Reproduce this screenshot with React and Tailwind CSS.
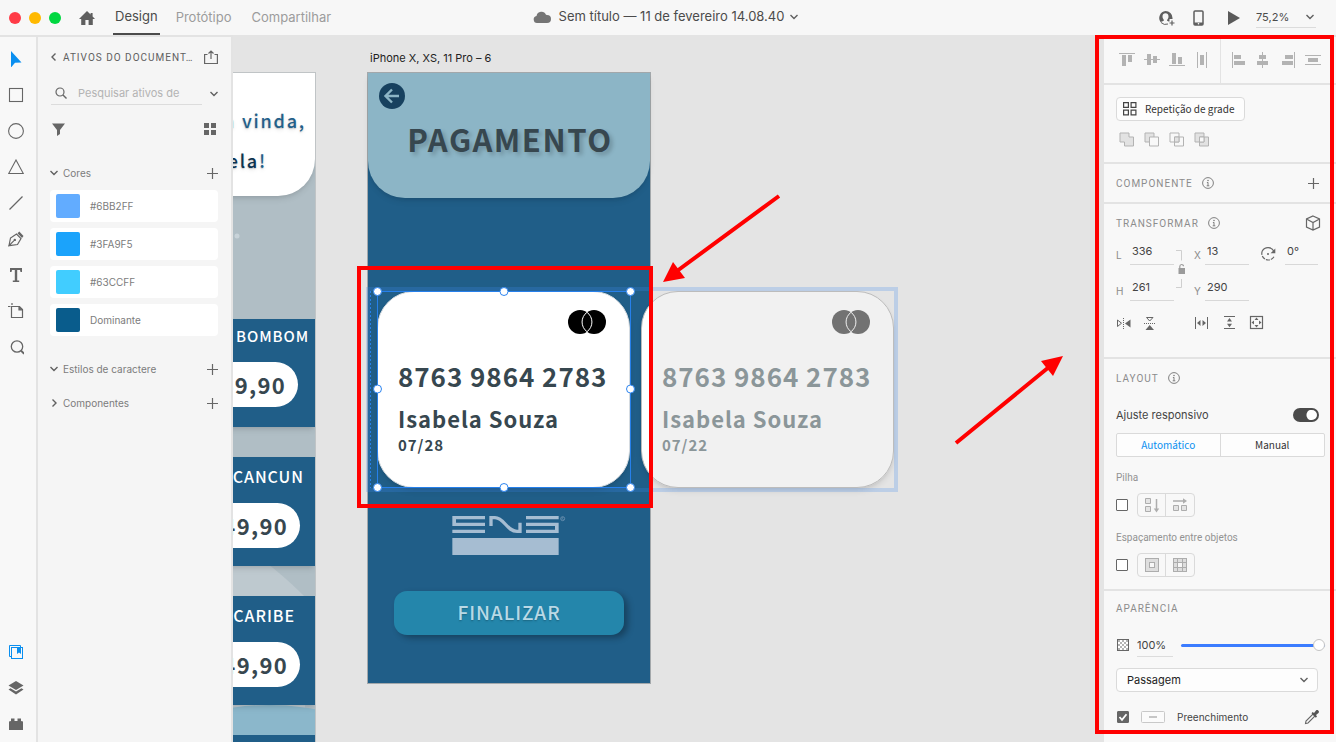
import { useState } from 'react'

const COLORS = [
  { name: '#6BB2FF', swatch: 'bg-[#62acff]' },
  { name: '#3FA9F5', swatch: 'bg-[#1ba3fb]' },
  { name: '#63CCFF', swatch: 'bg-[#41cdff]' },
  { name: 'Dominante', swatch: 'bg-[#095c8c]' },
]

const TRIPS = [
  { title: 'EM BOMBOM', card: 'h-[108px] pt-[3px]', text: 'pr-[6px] text-[15px]', pill: 'mt-3 mr-[17px]' },
  { title: 'CANCUN', card: 'h-[109px] pt-[5px]', text: 'pr-[11px] text-base', pill: 'mt-[13px] mr-[15px]' },
  { title: 'CARIBE', card: 'h-[109px] pt-[5px]', text: 'pr-5 text-base', pill: 'mt-[13px] mr-[15px]' },
]

function Svg({ w = 16, h = 16, className = '', children }) {
  return (
    <svg
      width={w}
      height={h}
      viewBox={`0 0 ${w} ${h}`}
      fill="none"
      aria-hidden="true"
      className={`shrink-0 ${className}`}
    >
      {children}
    </svg>
  )
}

function Chevron({ dir = 'down' }) {
  const d = {
    down: 'M1.5 3 5 6.500l3.500-3.500',
    left: 'M6.5 1.5 3 5l3.5 3.5',
    right: 'M3.5 1.5 7 5 3.5 8.5',
  }[dir]
  return (
    <Svg w={10} h={10}>
      <path d={d} stroke="#606060" strokeWidth="1.4" />
    </Svg>
  )
}

function Plus() {
  return (
    <Svg w={12} h={12}>
      <path d="M6.5 1v11M1 6.5h11" stroke="#666" strokeWidth="1.2" />
    </Svg>
  )
}

function Info() {
  return (
    <Svg w={12} h={12}>
      <circle cx="6" cy="6" r="5.4" stroke="#808080" />
      <path d="M6 5.3v3.6M4.9 5.5H6M4.7 8.8h2.6" stroke="#808080" />
      <circle cx="6" cy="3.5" r=".8" fill="#808080" />
    </Svg>
  )
}

/* Header */

function Header() {
  return (
    <header className="grid h-[35px] shrink-0 grid-cols-[1fr_auto_1fr] items-center bg-[#f7f7f7] text-[13px] text-[#4b4b4b]">
      <div className="flex h-full items-center">
        <div className="flex gap-2 pl-[9px]">
          <span className="size-3 rounded-full bg-[#ff3b47]" />
          <span className="size-3 rounded-full bg-[#ffb900]" />
          <span className="size-3 rounded-full bg-[#00d740]" />
        </div>
        <button aria-label="Início" className="ml-[18px]">
          <Svg w={16} h={16}>
            <path d="M8 1 0 9h2.2v6H6.4v-5h3.2v5h4.2V9H16l-2.4-2.4V3h-2v1.6z" fill="#5f5f5f" />
          </Svg>
        </button>
        <nav className="ml-[18px] flex h-full items-center">
          <a href="#design" className="flex h-full items-center border-b-2 border-[#4b4b4b] px-[2px] pt-px">
            Design
          </a>
          <a href="#prototipo" className="ml-4 text-[#9c9c9c]">Protótipo</a>
          <a href="#compartilhar" className="ml-5 text-[#9c9c9c]">Compartilhar</a>
        </nav>
      </div>
      <button className="flex items-center pr-1 pb-px">
        <Svg w={18} h={12}>
          <path
            d="M4 12a3.6 3.6 0 0 1-.5-7.1A5 5 0 0 1 13 3.8a3.6 3.6 0 0 1 1 .2A4 4 0 0 1 14 12z"
            fill="#757575"
          />
        </Svg>
        <span className="mr-[5px] ml-2">Sem título — 11 de fevereiro 14.08.40</span>
        <Chevron />
      </button>
      <div className="flex items-center justify-end pr-5">
        <button aria-label="Convidar">
          <Svg w={17} h={16}>
            <path
              d="M7.5 1a7 7 0 0 1 7 7v1h-3v2.5h-1C9 11 9 10.300 9 10c1-1 1.500-2.300 1.500-3.500C10.500 4.500 9.300 3.300 7.500 3.300S4.500 4.500 4.500 6.500C4.500 7.700 5 9 6 10c0 1-2 1.300-3.300 2.200A7 7 0 0 1 7.500 1z"
              fill="#5f5f5f"
            />
            <path d="M3 12.500A6.500 6.500 0 0 0 10 14" stroke="#5f5f5f" />
            <path d="M14 10.500v5M11.500 13h5" stroke="#5f5f5f" strokeWidth="1.200" />
          </Svg>
        </button>
        <button aria-label="Visualizar no dispositivo" className="ml-[18px]">
          <Svg w={11} h={16}>
            <rect x="1" y="1" width="9" height="14" rx="1" stroke="#5f5f5f" strokeWidth="1.500" />
            <path d="M1 12.500h9V15H1z" fill="#5f5f5f" />
            <circle cx="5.500" cy="13.800" r=".8" fill="#fff" />
          </Svg>
        </button>
        <button aria-label="Reproduzir" className="ml-6">
          <Svg w={12} h={14}>
            <path d="M0 0v14l12-7z" fill="#5a5a5a" />
          </Svg>
        </button>
        <label className="ml-4 flex w-[60px] items-center border-b border-[#dcdcdc]">
          <input
            aria-label="Zoom"
            defaultValue="75,2%"
            className="h-5 w-[49px] bg-transparent text-[11px] outline-none"
          />
          <Chevron />
        </label>
      </div>
    </header>
  )
}

/* Tool column */

const TOOLS = [
  ['Selecionar', <path d="M3 0v16.500l4-4.800 6.500-.3z" fill="#0a8ff0" />],
  ['Retângulo', <rect x="1.500" y="1.500" width="13" height="13" stroke="#666" strokeWidth="1.100" />],
  ['Elipse', <circle cx="8" cy="8" r="7.400" stroke="#666" strokeWidth="1.100" />],
  ['Polígono', <path d="M8 1 .7 14.500h14.600z" stroke="#666" strokeWidth="1.100" />],
  ['Linha', <path d="M1.500 14.500l13-13" stroke="#666" strokeWidth="1.200" />],
  [
    'Caneta',
    <g>
      <path d="M1 14.500 2.500 7l6-4 4.500 4.500-3.500 6L1 14.700l5-5" stroke="#666" strokeWidth="1.200" />
      <circle cx="6.800" cy="8.900" r="1.200" fill="#666" />
      <path d="m9.500 2.200 1.800-1.700L15.500 5 14 7z" fill="#666" />
    </g>,
  ],
  ['Texto', <path d="M2 1h12v4h-1.500l-.5-2H9.200v10.500h2V15H4.800v-1.500h2V3H4l-.5 2H2z" fill="#666" />],
  [
    'Prancheta',
    <g stroke="#666" strokeWidth="1.200">
      <path d="M0 3.500h2.500M4 0v2" />
      <path d="M3.500 3.500h8l3 3v8h-11z" />
      <path d="M11 3.500v3.300h3.500" fill="#666" />
    </g>,
  ],
  [
    'Zoom',
    <g stroke="#666">
      <circle cx="9" cy="7.500" r="5.700" strokeWidth="1.300" />
      <path d="m13 11.600 3.200 3.200" strokeWidth="2" />
    </g>,
  ],
]

const PANELS = [
  [
    'Ativos',
    <g>
      <path d="M3 12.500H1.500v-11h11V3" stroke="#0a8ff0" />
      <rect x="3.500" y="3.500" width="11" height="11" stroke="#0a8ff0" />
      <path d="M9 3h4v7l-2-1.500L9 10z" fill="#0a8ff0" />
    </g>,
  ],
  [
    'Camadas',
    <g fill="#666">
      <path d="m8 1 7.500 4.500L8 10 .5 5.500z" />
      <path d="m.5 9.500 2-1.200L8 11.500l5.500-3.200 2 1.200L8 14.500z" />
    </g>,
  ],
  ['Plugins', <path d="M1 5.500 3 5V2.500h3.500V5h3V2.500H13V5l2 .5V14H1z" fill="#666" />],
]

function ToolBar() {
  return (
    <div className="flex w-[38px] shrink-0 flex-col justify-between border-r-2 border-[#e3e3e3] bg-[#f8f8f8] pt-1">
      <div className="flex flex-col">
        {TOOLS.map(([label, icon]) => (
          <button key={label} aria-label={label} className="flex h-9 items-center pl-2">
            <Svg>{icon}</Svg>
          </button>
        ))}
      </div>
      <div className="flex flex-col">
        {PANELS.map(([label, icon]) => (
          <button key={label} aria-label={label} className="flex h-9 items-center pl-2">
            <Svg>{icon}</Svg>
          </button>
        ))}
      </div>
    </div>
  )
}

/* Assets panel */

function AssetGroup({ title, open }) {
  return (
    <div className="flex h-[34px] items-center justify-between">
      <button className="flex items-center gap-1">
        <Chevron dir={open ? 'down' : 'right'} />
        {title}
      </button>
      <button aria-label={`Adicionar em ${title}`}>
        <Plus />
      </button>
    </div>
  )
}

function AssetsPanel() {
  return (
    <aside className="w-[195px] shrink-0 border-r-2 border-[#e3e3e3] bg-[#f5f5f5] pr-[13px] pl-[11px] text-[10px] text-[#7c7c7c]">
      <div className="flex h-10 items-center justify-between">
        <button className="flex items-center gap-1 font-['Roboto',sans-serif] tracking-[1px] whitespace-nowrap text-[#606060]">
          <Chevron dir="left" />
          ATIVOS DO DOCUMENT…
        </button>
        <button aria-label="Publicar">
          <Svg w={14} h={14}>
            <path d="M3.500 4.500H.6v9h12.800v-9h-2.900M7 9V1.500M4.500 3.500 7 1l2.500 2.500" stroke="#666" strokeWidth="1.200" />
          </Svg>
        </button>
      </div>
      <div className="mt-[5px] flex items-center justify-between">
        <label className="ml-[2px] flex h-[23px] w-[151px] items-center gap-[11px] border-b border-[#dcdcdc] pl-1">
          <Svg w={12} h={12}>
            <circle cx="5" cy="5" r="4" stroke="#666" strokeWidth="1.200" />
            <path d="m8 8 3.500 3.500" stroke="#666" strokeWidth="1.400" />
          </Svg>
          <input
            aria-label="Pesquisar ativos"
            placeholder="Pesquisar ativos de"
            className="w-full min-w-0 bg-transparent text-[11px] outline-none placeholder:text-[#b3b3b3]"
          />
        </label>
        <button aria-label="Opções de pesquisa" className="-mr-px">
          <Chevron />
        </button>
      </div>
      <div className="flex h-12 items-center justify-between">
        <button aria-label="Filtrar" className="ml-[3px]">
          <Svg w={13} h={13}>
            <path d="M0 .5h13L8 7v4l-3 2V7z" fill="#666" />
          </Svg>
        </button>
        <button aria-label="Exibir em grade">
          <Svg w={14} h={14}>
            <path d="M0 1h5v5H0zM7 1h5v5H7zM0 8h5v5H0zM7 8h5v5H7z" fill="#666" />
          </Svg>
        </button>
      </div>
      <div className="pt-[3px]">
        <AssetGroup title="Cores" open />
      </div>
      <ul className="ml-px flex flex-col gap-[6px]">
        {COLORS.map((c) => (
          <li key={c.name} className="flex h-8 items-center gap-[10px] rounded-sm bg-white px-[6px]">
            <span className={`size-6 rounded-xs ${c.swatch}`} />
            {c.name}
          </li>
        ))}
      </ul>
      <div className="mt-4">
        <AssetGroup title="Estilos de caractere" open />
        <AssetGroup title="Componentes" />
      </div>
    </aside>
  )
}

/* Canvas */

function HomeArtboard() {
  return (
    <div className="absolute top-[37px] -left-[201px] h-[800px] w-[284px] overflow-hidden border border-[#c0c4c6] bg-[#b0bec5] font-['Noto_Sans_CJK_JP',sans-serif]">
      <svg className="absolute inset-0" width="282" height="798" viewBox="0 0 282 798" aria-hidden="true">
        <path d="M0 800V470h180c32 0 62 24 92 54v276H0z" fill="#bec9cf" />
        <ellipse cx="236" cy="760" rx="180" ry="128" fill="#8bb7cb" />
        <circle cx="204" cy="163" r="2.500" fill="#c8d3d9" />
      </svg>
      <div className="relative flex flex-col">
        <div className="flex h-[123px] flex-col items-end rounded-b-[37px] bg-white pt-8 text-lg leading-[30px] font-medium tracking-widest shadow-md text-shadow-md">
          <span className="pr-[9px] text-[#23608a]">Bem vinda,</span>
          <span className="mt-[10px] pr-12 text-[#0c3350]">
            Isabela<span className="text-[#23608a]">!</span>
          </span>
        </div>
        <div className="mt-[123px] flex flex-col gap-[30px]">
          {TRIPS.map((trip) => (
            <div key={trip.title} className={`flex flex-col items-end bg-[#205e88] shadow-md ${trip.card}`}>
              <span className={`leading-7 font-medium tracking-[0.06em] text-white ${trip.text}`}>
                {trip.title}
              </span>
              <span
                className={`flex h-[45px] w-[200px] items-center justify-end rounded-full bg-white pr-3 text-[22px] font-bold tracking-[0.06em] text-[#37474f] ${trip.pill}`}
              >
                49,90
              </span>
            </div>
          ))}
          <div className="h-[70px] bg-[#205e88]" />
        </div>
      </div>
    </div>
  )
}

function Logo() {
  return (
    <svg width="114" height="39" viewBox="306 78 342 117" fill="#a6bdd2" role="img" aria-label="ENS">
      <path d="M307 78h98v10h-87v10h87v10h-98zM307 119h98v10h-98z" />
      <path d="M528 78h98v10h-98zM528 98h98v31h-98v-10h87v-11h-87z" />
      <path d="M423 108V83h12c28 0 35 41 66 41h9V98" fill="none" stroke="#a6bdd2" strokeWidth="10" />
      <path d="M307 144h319v51H307z" />
      <circle cx="638" cy="86" r="6" fill="none" stroke="#7f9fbb" strokeWidth="2" />
      <path d="M636 89v-6h4M637 86l4 3" fill="none" stroke="#7f9fbb" strokeWidth="1.500" />
    </svg>
  )
}

function PaymentArtboard() {
  return (
    <div className="absolute top-[37px] left-[134px] flex h-[612px] w-[284px] flex-col items-center border border-[#a3a8ab] bg-[#205e88] font-['Noto_Sans_CJK_JP',sans-serif]">
      <div className="flex h-[125px] w-full flex-col rounded-b-[37px] bg-[#8cb5c6] pt-[10px] shadow-md">
        <button aria-label="Voltar" className="ml-[11px] flex size-[26px] items-center justify-center rounded-full bg-[#17415f]">
          <Svg w={18} h={18}>
            <path d="M16 9H3M9 2.500 2.500 9 9 15.500" stroke="#8cb5c6" strokeWidth="2.400" />
          </Svg>
        </button>
        <h1 className="mt-2 pl-[2px] text-center text-[31px] leading-[44px] font-bold tracking-wider text-[#37474f] text-shadow-[3px_3px_4px_rgb(0_0_0/0.2)]">
          PAGAMENTO
        </h1>
      </div>
      <div className="mt-auto">
        <Logo />
      </div>
      <button className="mt-9 mb-12 h-11 w-[230px] rounded-[13px] bg-[#2486ab] pb-[2px] text-[19px] font-medium tracking-wider text-[#b9d9e6] shadow-[4px_3px_6px_rgb(0_0_0/0.3)] text-shadow-sm">
        FINALIZAR
      </button>
    </div>
  )
}

function CreditCard({ date, faded }) {
  return (
    <div
      className={`flex h-[197px] w-[253px] flex-col rounded-[37px] border pl-5 font-['Noto_Sans_CJK_JP',sans-serif] font-bold tracking-[0.06em] shadow-md ${
        faded
          ? 'border-[#bcbcbc] bg-[linear-gradient(to_right,#fff_9px,#f1f1f1_9px)] text-[#8b9699]'
          : 'border-[#d5dbe0] bg-white text-[#37474f]'
      }`}
    >
      <svg
        width="38"
        height="24"
        viewBox="0 0 38 24"
        className="mt-[18px] mr-[23px] self-end"
        aria-hidden="true"
      >
        <g fill={faded ? '#727272' : '#000'}>
          <circle cx="12" cy="12" r="12" />
          <circle cx="26" cy="12" r="12" />
        </g>
        <path
          d="M19 2.300a12 12 0 0 1 0 19.400a12 12 0 0 1 0-19.400z"
          fill="none"
          stroke={faded ? '#f1f1f1' : '#fff'}
          strokeWidth="1"
        />
      </svg>
      <span className="mt-6 text-[26px] leading-9">8763 9864 2783</span>
      <span className="mt-[9px] text-[22px] leading-[30px]">Isabela Souza</span>
      <span className="text-[15px] leading-6">{date}</span>
    </div>
  )
}

function Canvas() {
  const handles = [
    [377.5, 291.5], [504, 291.5], [630.5, 291.5],
    [377.5, 389], [630.5, 389],
    [377.5, 487.5], [504, 487.5], [630.5, 487.5],
  ]

  return (
    <main className="relative min-w-0 flex-1 overflow-hidden bg-[#e4e4e4]">
      <HomeArtboard />
      <span className="absolute top-[15px] left-[137px] text-[11px] leading-4 text-[#222]">
        iPhone X, XS, 11 Pro – 6
      </span>
      <PaymentArtboard />
      <div className="absolute top-[256px] left-[408px]">
        <CreditCard date="07/22" faded />
      </div>
      <div className="absolute top-[256px] left-[144px]">
        <CreditCard date="07/28" />
      </div>

      {/* selection and annotations */}
      <svg className="pointer-events-none absolute inset-0 h-full w-full" aria-hidden="true">
        <g transform="translate(-233 -35)">
          <rect x="368" y="289" width="528" height="201" fill="none" stroke="#3f8cf0" strokeOpacity=".24" strokeWidth="4" />
          <path d="M370.500 291v197" stroke="#2680eb" strokeDasharray="2 2" />
          <rect x="377.500" y="291.500" width="253" height="196" fill="none" stroke="#2680eb" />
          {handles.map(([x, y]) => (
            <circle key={`${x}-${y}`} cx={x} cy={y} r="4" fill="#fff" stroke="#2f86f0" />
          ))}
          <rect x="359" y="268" width="292" height="238" fill="none" stroke="#f00" strokeWidth="4" />
          <path d="m779 196-102 75M956 443l93-76" stroke="#f00" strokeWidth="4" />
          <path d="m663 282 10-20 12 16zM1063 356l-22 5 12 15z" fill="#f00" />
        </g>
      </svg>
    </main>
  )
}

/* Property inspector */

const ALIGN_V = [
  ['Alinhar ao topo', <path d="M0 2h16v1H0zM3 4h4v11H3zM9 4h4v7H9z" />],
  ['Alinhar ao meio', <path d="M0 8h16v1H0zM3 3h4v11H3zM9 5h4v7H9z" />],
  ['Alinhar à base', <path d="M0 14h16v1H0zM3 2h4v11H3zM9 6h4v7H9z" />],
  ['Distribuir na horizontal', <path d="M3 1h1v16H3zM12 1h1v16h-1zM6 4h4v10H6z" />],
]

const ALIGN_H = [
  ['Alinhar à esquerda', <path d="M2 1h1v16H2zM4 4h7v4H4zM4 10h11v4H4z" />],
  ['Alinhar ao centro', <path d="M7 1h1v16H7zM4 4h7v4H4zM2 10h11v4H2z" />],
  ['Alinhar à direita', <path d="M14 1h1v16h-1zM5 4h8v4H5zM2 10h11v4H2z" />],
  ['Distribuir na vertical', <path d="M0 4h16v1H0zM0 13h16v1H0zM3 7h10v4H3z" />],
]

const BOOLEANS = [
  ['Adicionar', <path d="M2 2h9v4h4.500v9h-9v-4H2z" fill="#e2e2e2" />],
  ['Subtrair', <g><path d="M2 2h9v9H2z" fill="#e2e2e2" /><path d="M6.500 6h9v9h-9z" fill="#f8f8f8" /></g>],
  ['Interseção', <g><path d="M2 2h9v9H2zM6.500 6h9v9h-9z" /><path d="M6.500 6H11v5H6.500z" fill="#e2e2e2" /></g>],
  ['Excluir sobreposição', <g><path d="M2 2h9v9H2zM6.500 6h9v9h-9z" fill="#e2e2e2" /><path d="M6.500 6H11v5H6.500z" fill="#f8f8f8" /></g>],
]

function SectionTitle({ children, info }) {
  return (
    <h2 className="flex items-center gap-[9px] font-['Roboto',sans-serif] text-[10px] tracking-[1px] text-[#8c8c8c]">
      {children}
      {info && <Info />}
    </h2>
  )
}

function Field({ label, value, labelWidth }) {
  return (
    <label className="flex h-[23px] items-center text-[#8c8c8c]">
      <span className={`pt-1 text-[10px] ${labelWidth}`}>{label}</span>
      <input
        defaultValue={value}
        className="h-full w-11 border-b border-[#d8d8d8] bg-transparent pb-1 pl-[2px] text-[11px] text-[#444] outline-none"
      />
    </label>
  )
}

function IconPair({ labels, children }) {
  return (
    <div className="flex h-6 divide-x divide-[#dadada] rounded-sm border border-[#dadada]">
      {labels.map((label, i) => (
        <button key={label} aria-label={label} className="flex w-7 items-center justify-center">
          {children[i]}
        </button>
      ))}
    </div>
  )
}

function TransformSection() {
  return (
    <section className="border-b-2 border-[#e3e3e3] pr-[15px] pb-[26px] pl-3">
      <div className="flex h-[38px] items-center justify-between">
        <SectionTitle info>TRANSFORMAR</SectionTitle>
        <button aria-label="Transformações 3D">
          <Svg>
            <path d="m8 1 6.500 3v8L8 15l-6.500-3V4zM1.500 4 8 7.500 14.500 4M8 7.500V15" stroke="#666" strokeWidth="1.200" />
          </Svg>
        </button>
      </div>
      <div className="flex">
        <div className="flex flex-col gap-[13px]">
          <Field label="L" value="336" labelWidth="w-[14px]" />
          <Field label="H" value="261" labelWidth="w-[14px]" />
        </div>
        <button aria-label="Bloquear proporção" className="mr-2 ml-[2px] self-start pt-[6px]">
          <Svg w={10} h={44}>
            <path d="M0 2.500h5.500v10M5.500 31v8.500H0" stroke="#cfcfcf" />
            <path d="M2.500 20h6.500v6H2.500z" fill="#9b9b9b" />
            <path d="M3.800 20v-1.500c0-2.600 3.700-2.600 3.700-.3" stroke="#9b9b9b" strokeWidth="1.200" />
          </Svg>
        </button>
        <div className="flex flex-col gap-[13px]">
          <Field label="X" value="13" labelWidth="w-[11px]" />
          <Field label="Y" value="290" labelWidth="w-[11px]" />
        </div>
        <label className="mr-[3px] ml-auto flex h-[23px] items-center">
          <Svg>
            <path d="M14 5.500A6.500 6.500 0 0 0 2.300 5" stroke="#666" strokeWidth="1.200" />
            <path d="M2.300 5a6.500 6.500 0 0 0 12 5" stroke="#666" strokeWidth="1.200" strokeDasharray="4 1" />
            <path d="M15.300 2.500v4.700h-4.700z" fill="#666" />
            <circle cx="8" cy="8" r="1" fill="#666" />
          </Svg>
          <input
            aria-label="Rotação"
            defaultValue="0°"
            className="ml-[9px] h-full w-[33px] border-b border-[#d8d8d8] bg-transparent pb-1 pl-[2px] text-[11px] text-[#444] outline-none"
          />
        </label>
      </div>
      <div className="mt-[14px] flex text-[#666]">
        <button aria-label="Inverter na horizontal">
          <Svg>
            <path d="M1.500 5v6.500L5.500 8.200z" stroke="currentColor" />
            <path d="M14.500 4.500v8L9 8.500z" fill="currentColor" />
            <path d="M7.500 3v11" stroke="currentColor" strokeDasharray="1 1" />
          </Svg>
        </button>
        <button aria-label="Inverter na vertical" className="ml-[10px]">
          <Svg>
            <path d="M4.500 2.500h6.500L7.700 6z" stroke="currentColor" />
            <path d="M3.500 15h8.500L7.700 10z" fill="currentColor" />
            <path d="M2 8.500h12" stroke="currentColor" strokeDasharray="1 1" />
          </Svg>
        </button>
        <button aria-label="Espaço horizontal" className="ml-9">
          <Svg>
            <path d="M1.500 2v12M13.500 2v12" stroke="currentColor" />
            <path d="M3 8l3.500-3v6zM12 8 8.500 5v6z" fill="currentColor" />
          </Svg>
        </button>
        <button aria-label="Espaço vertical" className="ml-3">
          <Svg>
            <path d="M2 1.500h11M2 13.500h11" stroke="currentColor" />
            <path d="M7.500 3 5 6.500h5zM7.500 12.200 5 8.800h5z" fill="currentColor" />
          </Svg>
        </button>
        <button aria-label="Ajustar ao conteúdo" className="ml-[11px]">
          <Svg>
            <rect x="1.500" y="1.500" width="12" height="12" stroke="currentColor" strokeWidth="1.200" />
            <path d="m7.500 2.500 2 2.500h-4zM7.500 12.500l2-2.500h-4zM2.500 7.500l2.500-2v4zM12.500 7.500l-2.500-2v4z" fill="currentColor" />
          </Svg>
        </button>
      </div>
    </section>
  )
}

function LayoutSection() {
  const [responsive, setResponsive] = useState(true)
  const [mode, setMode] = useState('Automático')

  return (
    <section className="border-b-2 border-[#e3e3e3] pr-[11px] pb-3 pl-3">
      <div className="flex h-[38px] items-center">
        <SectionTitle info>LAYOUT</SectionTitle>
      </div>
      <label className="flex h-9 items-center justify-between pr-[6px] text-[#444]">
        Ajuste responsivo
        <input
          type="checkbox"
          role="switch"
          checked={responsive}
          onChange={(e) => setResponsive(e.target.checked)}
          className="h-[14px] w-[26px] appearance-none rounded-full border-2 border-[#4b4b4b] bg-[radial-gradient(circle_at_5px_5px,#fff_5px,#4b4b4b_6px)] checked:bg-[radial-gradient(circle_at_17px_5px,#fff_5px,#4b4b4b_6px)]"
        />
      </label>
      <div className="grid h-6 grid-cols-2 divide-x divide-[#dadada] rounded-xs border border-[#dadada] bg-[#fdfdfd] font-['Noto_Sans_CJK_JP',sans-serif] text-[10px]">
        {['Automático', 'Manual'].map((m) => (
          <button
            key={m}
            onClick={() => setMode(m)}
            className={`leading-5 ${mode === m ? 'text-[#0a8ff0]' : 'text-[#333]'}`}
          >
            {m}
          </button>
        ))}
      </div>
      <p className="mt-3 font-['Roboto',sans-serif] text-[10px] leading-[18px] text-[#939393]">Pilha</p>
      <div className="mt-[6px] flex items-center gap-[9px]">
        <input
          type="checkbox"
          aria-label="Pilha"
          className="size-3 appearance-none rounded-[1px] border border-[#666] bg-white"
        />
        <IconPair labels={['Pilha vertical', 'Pilha horizontal']}>
          <Svg>
            <path d="M1.500 1.500h5v5h-5zM1.500 9.500h5v5h-5z" fill="#e4e4e4" stroke="#adadad" />
            <path d="M12.500 2v10" stroke="#adadad" strokeWidth="1.500" />
            <path d="M9.800 11.500h5.400l-2.700 4z" fill="#adadad" />
          </Svg>
          <Svg>
            <path d="M1.500 8.500h5v5h-5zM9.500 8.500h5v5h-5z" fill="#e4e4e4" stroke="#adadad" />
            <path d="M1 4h10" stroke="#adadad" strokeWidth="1.500" />
            <path d="M11 1.300v5.400L15 4z" fill="#adadad" />
          </Svg>
        </IconPair>
      </div>
      <p className="mt-3 font-['Roboto',sans-serif] text-[10px] leading-[18px] text-[#939393]">
        Espaçamento entre objetos
      </p>
      <div className="mt-[6px] flex items-center gap-[9px]">
        <input
          type="checkbox"
          aria-label="Espaçamento entre objetos"
          className="size-3 appearance-none rounded-[1px] border border-[#666] bg-white"
        />
        <IconPair labels={['Mesmo preenchimento', 'Preenchimento individual']}>
          <Svg>
            <rect x="1.500" y="1.500" width="13" height="13" fill="#dedede" stroke="#adadad" />
            <rect x="5.500" y="5.500" width="5" height="5" fill="#f8f8f8" stroke="#adadad" />
          </Svg>
          <Svg>
            <rect x="1.500" y="1.500" width="13" height="13" fill="#dedede" stroke="#adadad" />
            <path d="M5.500 5.500h5v5h-5z" fill="#f8f8f8" />
            <path d="M5.500 1v14M10.500 1v14M1 5.500h14M1 10.500h14" stroke="#adadad" />
          </Svg>
        </IconPair>
      </div>
    </section>
  )
}

function AppearanceSection() {
  const [opacity, setOpacity] = useState(100)

  return (
    <section className="pr-[11px] pl-3 text-[#444]">
      <div className="flex h-[34px] items-center">
        <SectionTitle>APARÊNCIA</SectionTitle>
      </div>
      <div className="flex h-10 items-center pl-px">
        <Svg w={12} h={12}>
          <rect x=".5" y=".5" width="11" height="11" fill="#fff" stroke="#666" />
          <path
            d="M1 1h2v2H1zM5 1h2v2H5zM9 1h2v2H9zM3 3h2v2H3zM7 3h2v2H7zM1 5h2v2H1zM5 5h2v2H5zM9 5h2v2H9zM3 7h2v2H3zM7 7h2v2H7zM1 9h2v2H1zM5 9h2v2H5zM9 9h2v2H9z"
            fill="#b3b3b3"
          />
        </Svg>
        <input
          aria-label="Opacidade"
          value={`${opacity}%`}
          readOnly
          className="mx-2 h-[23px] w-9 border-b border-[#dcdcdc] bg-transparent text-[11px] outline-none"
        />
        <input
          type="range"
          aria-label="Controle de opacidade"
          value={opacity}
          onChange={(e) => setOpacity(Number(e.target.value))}
          className="h-[3px] min-w-0 flex-1 appearance-none rounded-full bg-[#3b7cff] [&::-webkit-slider-thumb]:size-3 [&::-webkit-slider-thumb]:appearance-none [&::-webkit-slider-thumb]:rounded-full [&::-webkit-slider-thumb]:border [&::-webkit-slider-thumb]:border-[#c4c4c4] [&::-webkit-slider-thumb]:bg-white"
        />
      </div>
      <div className="relative mt-[3px] mr-[7px]">
        <select
          aria-label="Modo de mesclagem"
          className="h-6 w-full appearance-none rounded-sm border border-[#dadada] bg-[#fdfdfd] pl-[10px] text-[#222]"
        >
          <option>Passagem</option>
        </select>
        <span className="pointer-events-none absolute top-[7px] right-[9px]">
          <Chevron />
        </span>
      </div>
      <div className="mt-3 flex h-[26px] items-center pr-[5px] pl-px">
        <label className="flex items-center">
          <input type="checkbox" defaultChecked className="peer size-3 appearance-none rounded-[1px] border border-[#666] checked:bg-[#666]" />
          <Svg w={12} h={12} className="-ml-3 hidden peer-checked:block">
            <path d="m2.500 6 2.500 2.800 4.500-5.500" stroke="#fff" strokeWidth="1.800" />
          </Svg>
          <Svg w={24} h={12} className="mx-3">
            <rect x=".5" y=".5" width="23" height="11" rx="1" fill="#fbfbfb" stroke="#c9c9c9" />
            <path d="M8 6h8" stroke="#b5b5b5" strokeWidth="1.500" />
          </Svg>
          <span className="text-[10px]">Preenchimento</span>
        </label>
        <button aria-label="Conta-gotas" className="ml-auto">
          <Svg>
            <path d="M1.500 14.500 2 12l7-7 2 2-7 7z" stroke="#666" strokeWidth="1.100" />
            <path d="m7.500 4.200 1.200-1.200 1.300 1L12 1.500c1.500-1.500 4 1 2.500 2.500L12 6l1 1.500-1.200 1.200z" fill="#555" />
          </Svg>
        </button>
      </div>
    </section>
  )
}

function Inspector() {
  return (
    <aside className="relative w-[232px] shrink-0 border-t-2 border-[#e3e3e3] bg-[#f8f8f8] text-[11px]">
      <div className="flex h-12 border-b-2 border-[#e3e3e3] pl-[11px] text-[#b3b3b3]">
        <div className="flex items-center pr-[5px]">
          {ALIGN_V.map(([label, icon]) => (
            <button key={label} aria-label={label} className="flex w-[25px] justify-center">
              <Svg w={17} h={18}><g fill="currentColor">{icon}</g></Svg>
            </button>
          ))}
        </div>
        <div className="flex items-center border-l border-[#e3e3e3] pl-[5px]">
          {ALIGN_H.map(([label, icon]) => (
            <button key={label} aria-label={label} className="flex w-[25px] justify-center">
              <Svg w={17} h={18}><g fill="currentColor">{icon}</g></Svg>
            </button>
          ))}
        </div>
      </div>
      <section className="border-b-2 border-[#e3e3e3] pt-3 pb-[14px] pl-3">
        <button className="flex h-6 items-center gap-2 rounded-sm border border-[#dadada] bg-[#fdfdfd] pr-[10px] pl-[6px] font-['Noto_Sans_CJK_JP',sans-serif] text-[10px] leading-5 text-[#333]">
          <Svg w={14} h={14}>
            <path d="M.6.6h4.800v4.800H.6zM8.100.6h4.800v4.800H8.100zM.6 8.100h4.800v4.800H.6zM8.100 8.100h4.800v4.800H8.100z" stroke="#444" strokeWidth="1.200" />
          </Svg>
          Repetição de grade
        </button>
        <div className="mt-[9px] flex gap-[7px] pl-px">
          {BOOLEANS.map(([label, icon]) => (
            <button key={label} aria-label={label}>
              <Svg w={18} h={18}><g transform="translate(1 1)" stroke="#b3b3b3">{icon}</g></Svg>
            </button>
          ))}
        </div>
      </section>
      <section className="flex h-10 items-center justify-between border-b-2 border-[#e3e3e3] pr-[17px] pl-3">
        <SectionTitle info>COMPONENTE</SectionTitle>
        <button aria-label="Adicionar componente">
          <Plus />
        </button>
      </section>
      <TransformSection />
      <LayoutSection />
      <AppearanceSection />
      <div className="pointer-events-none absolute -top-[2px] right-[2px] bottom-2 -left-[9px] border-4 border-[#f00]" />
    </aside>
  )
}

export default function App() {
  return (
    <div className="flex h-screen flex-col overflow-hidden bg-[#f8f8f8] font-['Inter',sans-serif] text-[#4b4b4b]">
      <Header />
      <div className="flex min-h-0 flex-1">
        <div className="flex shrink-0 border-t-2 border-[#e3e3e3]">
          <ToolBar />
          <AssetsPanel />
        </div>
        <Canvas />
        <Inspector />
      </div>
    </div>
  )
}
